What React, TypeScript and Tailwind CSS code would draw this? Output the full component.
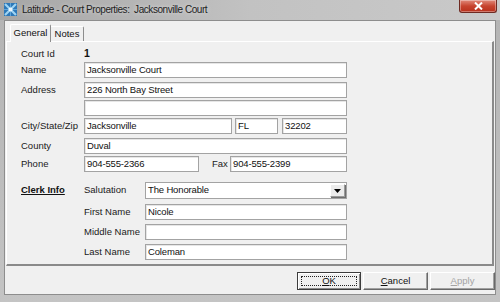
import React from 'react';

const Field = ({ className = '', value = '' }: { className?: string; value?: string }) => (
  <div
    className={`h-[16px] bg-white border border-[#a3a3a3] shadow-[inset_1px_1px_0_#e6e6e6] pl-[2px] flex items-center text-[9.5px] tracking-[-0.15px] text-[#111] overflow-hidden whitespace-nowrap ${className}`}
  >
    {value}
  </div>
);

const Row = ({ label, labelW = 'w-[63px]', className = '', children }: { label: string; labelW?: string; className?: string; children: React.ReactNode }) => (
  <div className={`flex items-center ${className}`}>
    <span className={`${labelW} shrink-0 text-[9.5px] text-[#1a1a1a]`}>{label}</span>
    {children}
  </div>
);

const AppIcon = () => (
  <svg width="13" height="13" viewBox="0 0 13 13" className="shrink-0">
    <rect x="0" y="0" width="13" height="13" fill="#2d78b8" />
    <path d="M1 1 L12 12 M12 1 L1 12" stroke="#9ed3f2" strokeWidth="2.2" />
    <path d="M6.5 0 V13 M0 6.5 H13" stroke="#5fa6dc" strokeWidth="1" />
    <circle cx="6.5" cy="6.5" r="2" fill="#ffffff" opacity="0.85" />
  </svg>
);

export default function App() {
  return (
    <div className="w-[500px] h-[302px] overflow-hidden bg-gradient-to-b from-[#b3b3b3] to-[#c4c4c4] font-['Liberation_Sans',Arial,sans-serif] select-none">
      {/* title bar */}
      <div className="h-[20px] flex items-start bg-gradient-to-r from-[#a6a6a6] via-[#c2c2c2] to-[#c9c9c9]">
        <div className="flex items-center h-[19px] pl-[4px] gap-[5px]">
          <AppIcon />
          <span className="text-[10px] text-[#1e1e1e] tracking-[-0.45px] [text-shadow:0_0_4px_rgba(255,255,255,0.6)]">
            Latitude - Court Properties:&nbsp; Jacksonville Court
          </span>
        </div>
        <div className="ml-auto mr-[3px] w-[38px] h-[13px] rounded-b-[3px] border border-t-0 border-[#6e2a22] bg-gradient-to-b from-[#e0897a] via-[#c7442f] to-[#b8301c] flex items-center justify-center shadow-[inset_0_0_0_1px_rgba(255,255,255,0.35)]">
          <svg width="9" height="8" viewBox="0 0 9 8">
            <path d="M1 0.5 L8 7.5 M8 0.5 L1 7.5" stroke="#ffffff" strokeWidth="2" />
          </svg>
        </div>
      </div>

      {/* client */}
      <div className="mx-[4px] h-[275px] border border-[#8d8d8d] bg-[#f0f0f0] flex flex-col">
        {/* tabs */}
        <div className="flex items-end h-[19px] ml-[5px] mt-[1px]">
          <div className="relative z-10 -mb-px h-[18px] w-[41px] border-l border-t border-r border-t-white border-l-white border-r-[#8d8d8d] rounded-t-[2px] bg-[#f0f0f0] flex items-center justify-center text-[9.5px] text-[#111]">
            General
          </div>
          <div className="h-[15px] w-[33px] border-t border-r border-t-white border-r-[#8d8d8d] rounded-tr-[2px] flex items-center justify-center text-[9.5px] text-[#111]">
            Notes
          </div>
        </div>

        {/* panel */}
        <div className="ml-[1px] mr-[1px] h-[225px] border-t border-l border-b-2 border-r-2 border-t-white border-l-white border-b-[#8a8a8a] border-r-[#8a8a8a] flex flex-col pl-[14px] pt-[5px]">
          <Row label="Court Id" className="h-[14px]">
            <span className="text-[10.5px] font-bold text-[#111]">1</span>
          </Row>
          <Row label="Name" className="mt-[1px]">
            <Field className="w-[263px]" value="Jacksonville Court" />
          </Row>
          <Row label="Address" className="mt-[4px]">
            <Field className="w-[263px]" value="226 North Bay Street" />
          </Row>
          <Row label="" className="mt-[2px]">
            <Field className="w-[263px]" />
          </Row>
          <Row label="City/State/Zip" className="mt-[2px]">
            <Field className="w-[148px]" value="Jacksonville" />
            <Field className="w-[43px] ml-[3px]" value="FL" />
            <Field className="w-[65px] ml-[4px]" value="32202" />
          </Row>
          <Row label="County" className="mt-[4px]">
            <Field className="w-[263px]" value="Duval" />
          </Row>
          <Row label="Phone" className="mt-[2px]">
            <Field className="w-[115px]" value="904-555-2366" />
            <span className="ml-[13px] w-[18px] text-[9.5px] text-[#1a1a1a]">Fax</span>
            <Field className="w-[117px]" value="904-555-2399" />
          </Row>

          {/* clerk info */}
          <div className="flex mt-[10px]">
            <div className="w-[63px] h-[17px] flex items-center">
              <span className="text-[9.5px] font-bold underline text-[#111]">Clerk Info</span>
            </div>
            <div className="flex flex-col">
              <Row label="Salutation" labelW="w-[61px]">
                <div className="w-[202px] h-[17px] bg-white border border-[#a3a3a3] flex items-center pl-[2px] text-[9.5px] tracking-[-0.15px] text-[#111]">
                  <span className="flex-1">The Honorable</span>
                  <div className="w-[15px] h-[13px] mr-[1px] bg-[#ececec] border border-[#9a9a9a] border-t-white border-l-white shadow-[1px_1px_0_#6e6e6e] flex items-center justify-center">
                    <svg width="7" height="4" viewBox="0 0 7 4">
                      <path d="M0 0 H7 L3.5 4 Z" fill="#000" />
                    </svg>
                  </div>
                </div>
              </Row>
              <Row label="First Name" labelW="w-[61px]" className="mt-[5px]">
                <Field className="w-[202px]" value="Nicole" />
              </Row>
              <Row label="Middle Name" labelW="w-[61px]" className="mt-[4px]">
                <Field className="w-[202px]" />
              </Row>
              <Row label="Last Name" labelW="w-[61px]" className="mt-[4px]">
                <Field className="w-[202px]" value="Coleman" />
              </Row>
            </div>
          </div>
        </div>

        {/* buttons */}
        <div className="flex justify-end gap-[2px] mt-[6px] mr-0">
          <div className="w-[64px] h-[18px] border border-[#3c3c3c] shadow-[inset_1px_1px_0_#ffffff,inset_-1px_-1px_0_#8a8a8a] bg-[#f0f0f0] p-[3px]">
            <div className="w-full h-full border border-dotted border-[#222] flex items-center justify-center text-[9.5px] text-[#111]">
              <span><span className="underline">O</span>K</span>
            </div>
          </div>
          <div className="w-[65px] h-[18px] border border-t-white border-l-white border-r-[#696969] border-b-[#696969] shadow-[inset_-1px_-1px_0_#a0a0a0] bg-[#f0f0f0] flex items-center justify-center text-[9.5px] text-[#111]">
            <span><span className="underline">C</span>ancel</span>
          </div>
          <div className="w-[65px] h-[18px] border border-t-white border-l-white border-r-[#696969] border-b-[#696969] shadow-[inset_-1px_-1px_0_#a0a0a0] bg-[#f0f0f0] flex items-center justify-center text-[9.5px] text-[#a3a3a3]">
            <span><span className="underline">A</span>pply</span>
          </div>
        </div>
      </div>
    </div>
  );
}
